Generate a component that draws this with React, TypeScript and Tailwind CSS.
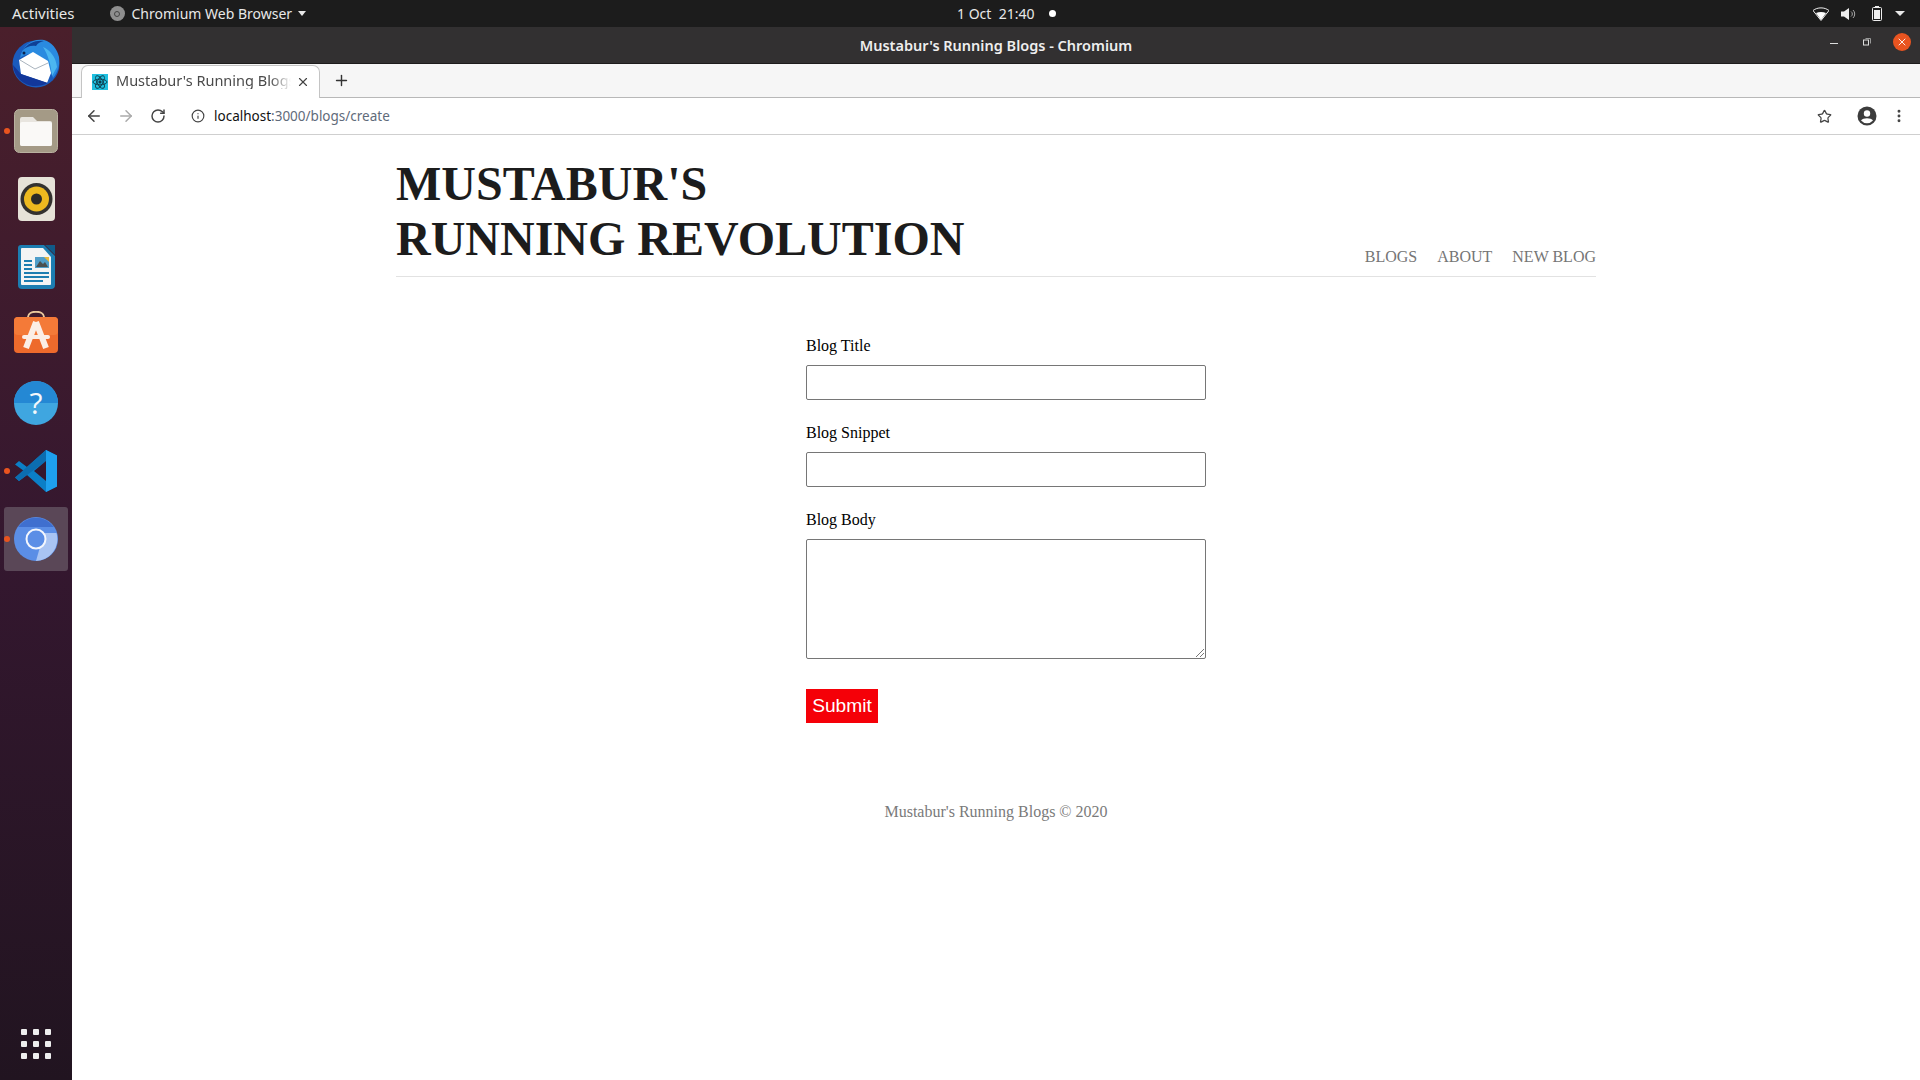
import React from "react";
import { ArrowLeft, ArrowRight, RotateCw, Info, Star, X, Plus, MoreVertical } from "lucide-react";

const Thunderbird = () => (
  <svg width="50" height="50" viewBox="0 0 50 50">
    <circle cx="25" cy="26" r="23.500" fill="#1a5bbd" />
    <path d="M9 20C11 8 21 0 33 2c8 2 13 9 15 17 1 8-1 15-6 21-2-7-5-14-10-19C25 15 16 14 9 20z" fill="#2a8ae0" />
    <path d="M12 12c5-7 13-10 21-9-4 1-6 2-8 5-5-1-10 1-13 4z" fill="#0f3f95" />
    <path d="M32 9c7 3 13 10 14 20l-5 9c-1-11-4-21-9-29z" fill="#4cb6f0" />
    <path d="M8 22L22 14l15 9 3 12-4 10-26-9z" fill="#ffffff" />
    <path d="M9 22l15 9 13-6" fill="none" stroke="#aab4be" strokeWidth="1" />
    <path d="M2 27c1 11 10 21 22 21 5 0 9-1 13-3L10 36z" fill="#12379a" />
    <circle cx="13" cy="15" r="1.500" fill="#0a2350" />
  </svg>
);
const Files = () => (
  <svg width="44" height="44" viewBox="0 0 44 44">
    <rect x="0.500" y="0.500" width="43" height="43" rx="5" fill="#a49a86" stroke="#b9b1a0" />
    <path d="M6 10a2 2 0 012-2h11l4 4h13a2 2 0 012 2v21a2 2 0 01-2 2H8a2 2 0 01-2-2z" fill="#e8e5df" />
    <path d="M6 15a2 2 0 012-2h28a2 2 0 012 2v20a2 2 0 01-2 2H8a2 2 0 01-2-2z" fill="#faf9f7" />
  </svg>
);
const Rhythmbox = () => (
  <svg width="37" height="44" viewBox="0 0 37 44">
    <rect width="37" height="44" rx="4" fill="#e6e2d8" />
    <circle cx="18.500" cy="22" r="16" fill="#33312f" />
    <circle cx="18.500" cy="22" r="12.500" fill="#edb91f" />
    <circle cx="18.500" cy="22" r="5.500" fill="#2b2a28" />
  </svg>
);
const Writer = () => (
  <svg width="37" height="44" viewBox="0 0 37 44">
    <path d="M3 0h23l11 11v29a4 4 0 01-4 4H4a4 4 0 01-4-4V3a3 3 0 013-3z" fill="#1c7db1" />
    <path d="M4 3h21l8 9v27a1 1 0 01-1 1H4a1 1 0 01-1-1V4a1 1 0 011-1z" fill="#f3f4f4" />
    <path d="M27 0l10 0 0 10z" fill="#105a88" />
    <path d="M6 15h8v2H6zM6 19h8v2H6zM6 23h8v2H6zM6 27h25v2H6zM6 31h25v2H6zM6 35h19v2H6z" fill="#1c7db1" />
    <rect x="17" y="12" width="14" height="11" fill="#4f9ec9" />
    <path d="M18 22l4-6 3 3 2-2 3 5z" fill="#4a4f4f" />
    <path d="M31 12v5l-5-5z" fill="#e9b93f" />
  </svg>
);
const Software = () => (
  <svg width="44" height="44" viewBox="0 0 44 44">
    <path d="M14 6c0-7 16-7 16 0" fill="none" stroke="#eac89c" strokeWidth="2" />
    <rect y="6" width="44" height="36" rx="4" fill="#ee6a2c" />
    <rect y="6" width="44" height="18" rx="4" fill="#f47a38" />
    <path d="M22 11L12 37M22 11l10 26" fill="none" stroke="#fbeee6" strokeWidth="6" />
    <rect x="8" y="24" width="28" height="4" rx="2" fill="#fbeee6" />
  </svg>
);
const Help = () => (
  <svg width="44" height="44" viewBox="0 0 44 44">
    <circle cx="22" cy="22" r="22" fill="#3fa6e0" />
    <path d="M0 22a22 22 0 0144 0z" fill="#2488d4" />
    <text x="22" y="33" textAnchor="middle" fontSize="30" fill="#f4f8fb" fontFamily="Open Sans, sans-serif" fontWeight="400">?</text>
  </svg>
);
const VSCode = () => (
  <svg width="44" height="44" viewBox="0 0 44 44">
    <path d="M32 1l11 5.500v31L32 43 13 26l-8 6-4-3.500L10 22 1 15.500 5 12l8 6z" fill="#0b7fc7" />
    <path d="M32 1l11 5.500v31L32 43z" fill="#1ea0ee" />
    <path d="M32 12L13 26l-8 6-4-3.500L32 1z" fill="#0c6db0" />
    <path d="M32 12L20 22l12 10z" fill="#35172c" />
  </svg>
);
const Chromium = () => (
  <svg width="44" height="44" viewBox="0 0 44 44">
    <circle cx="22" cy="22" r="22" fill="#5b8ee6" />
    <path d="M4 10A22 22 0 0140 10H22z" fill="#3f6fcf" />
    <path d="M30 16h12.500A22 22 0 0122 44z" fill="#a9c4f3" />
    <circle cx="22" cy="22" r="9.500" fill="#5b8ee6" stroke="#f4f7fd" strokeWidth="2" />
  </svg>
);

const Dot = () => <span className="absolute left-[4px] top-1/2 -mt-[3px] w-[6px] h-[6px] rounded-full bg-[#e9541f]" />;

function DockItem({ children, running, active, lift }: { children: React.ReactNode; running?: boolean; active?: boolean; lift?: boolean }) {
  return (
    <div className="relative h-[68px] w-full flex items-center justify-center">
      {active && <div className="absolute left-[4px] right-[4px] top-[2px] bottom-[2px] rounded-[3px] bg-[#5a4757]" />}
      {running && <Dot />}
      <div className={lift ? "relative flex items-center justify-center -mt-[4px]" : "relative flex items-center justify-center"}>{children}</div>
    </div>
  );
}

const Field = ({ label }: { label: string }) => (
  <div className="flex flex-col">
    <label className="text-[16px] leading-[18px] mb-[10px] text-black">{label}</label>
    <div className="h-[35px] border border-[#767676] rounded-[2px] bg-white" />
  </div>
);

export default function App() {
  return (
    <div className="w-[1920px] h-[1080px] overflow-hidden flex flex-col bg-white font-['Liberation_Serif',serif]">
      <div className="h-[27px] shrink-0 bg-[#1c1c1c] flex items-center text-[14px] text-[#e8e8e8] font-['Noto_Sans',sans-serif] relative">
        <span className="ml-[12px] leading-none text-[15px]">Activities</span>
        <span className="ml-[35px] w-[15px] h-[15px] rounded-full bg-[#8f8f8f] flex items-center justify-center">
          <span className="w-[6px] h-[6px] rounded-full border border-[#444]" />
        </span>
        <span className="ml-[7px] leading-none">Chromium Web Browser</span>
        <span className="ml-[6px] w-0 h-0 border-x-[4.5px] border-x-transparent border-t-[5px] border-t-[#e8e8e8]" />
        <span className="absolute left-[957px] top-[5px] leading-[17px] whitespace-nowrap">1 Oct&nbsp; 21:40</span>
        <span className="absolute left-[1049px] top-[10px] w-[7px] h-[7px] rounded-full bg-white" />
        <div className="ml-auto flex items-center mr-[15px]">
          <svg width="16" height="14" viewBox="0 0 16 14"><path d="M0 3.500C4.500 0 11.500 0 16 3.500L8 13.500z" fill="none" stroke="#eee" strokeWidth="1" /><path d="M3 6c3-1.500 7-1.500 10 0l-5 7z" fill="#fff" /></svg>
          <svg className="ml-[12px]" width="15" height="14" viewBox="0 0 15 14"><path d="M0 4.500h3L8 1v12L3 9.500H0z" fill="#eee" /><path d="M10 4.500a3 3 0 010 5M12 3a5.500 5.500 0 010 8" fill="none" stroke="#aaa" strokeWidth="1" /></svg>
          <svg className="ml-[16px]" width="10" height="15" viewBox="0 0 10 15"><rect x="0.500" y="1.500" width="9" height="13" rx="1" fill="none" stroke="#eee" /><rect x="3" y="0" width="4" height="1.500" fill="#eee" /><rect x="2" y="4" width="6" height="9" fill="#eee" /></svg>
          <span className="ml-[13px] w-0 h-0 border-x-[5px] border-x-transparent border-t-[5px] border-t-[#e8e8e8]" />
        </div>
      </div>

      <div className="flex-1 flex min-h-0">
        <div className="w-[72px] shrink-0 flex flex-col bg-gradient-to-b from-[#4a1f2b] via-[#34172f] to-[#211420]">
          <div className="h-[2px]" />
          <DockItem><Thunderbird /></DockItem>
          <DockItem running><Files /></DockItem>
          <DockItem><Rhythmbox /></DockItem>
          <DockItem><Writer /></DockItem>
          <DockItem lift><Software /></DockItem>
          <DockItem><Help /></DockItem>
          <DockItem running><VSCode /></DockItem>
          <DockItem running active><Chromium /></DockItem>
          <div className="mt-auto mb-[21px] self-center grid grid-cols-3 gap-[6px]">
            {Array.from({ length: 9 }).map((_, i) => (
              <span key={i} className="w-[6px] h-[6px] rounded-[1px] bg-[#eeeeee]" />
            ))}
          </div>
        </div>

        <div className="flex-1 min-w-0 flex flex-col">
          <div className="h-[37px] shrink-0 bg-[#323031] border-b border-[#1d1c1c] flex items-center relative font-['Noto_Sans',sans-serif]">
            <span className="w-full text-center text-[14.5px] font-semibold text-[#eeeeee] leading-none mt-[1px]">Mustabur's Running Blogs - Chromium</span>
            <div className="absolute right-[9px] top-[6px] flex items-center">
              <span className="w-[8px] h-px bg-[#ddd] mt-[3px]" />
              <svg className="ml-[25px]" width="8" height="8" viewBox="0 0 8 8"><rect x="0.500" y="2" width="5" height="5" fill="none" stroke="#ddd" /><path d="M2.500 0.500h5v5" fill="none" stroke="#999" /></svg>
              <span className="ml-[22px] w-[18px] h-[18px] rounded-full bg-[#e95420] flex items-center justify-center"><X size={12} color="#fff" strokeWidth={1.800} /></span>
            </div>
          </div>

          <div className="h-[34px] shrink-0 bg-[#f6f6f6] border-b border-[#b8b8b8] flex items-end relative font-['Noto_Sans',sans-serif]">
            <div className="ml-[9px] w-[239px] h-[33px] -mb-px bg-white border border-b-0 border-[#c4c4c4] rounded-t-[7px] flex items-center relative">
              <span className="ml-[10px] -mt-[1px] w-[16px] h-[16px] bg-[#1fc0e0] flex items-center justify-center shrink-0">
                <svg width="16" height="16" viewBox="0 0 16 16" fill="none" stroke="#0c3a4a" strokeWidth="0.900"><ellipse cx="8" cy="8" rx="7" ry="2.800" /><ellipse cx="8" cy="8" rx="7" ry="2.800" transform="rotate(60 8 8)" /><ellipse cx="8" cy="8" rx="7" ry="2.800" transform="rotate(120 8 8)" /><circle cx="8" cy="8" r="1.200" fill="#0c3a4a" /></svg>
              </span>
              <span className="ml-[8px] -mt-[4px] w-[175px] overflow-hidden whitespace-nowrap text-[14.5px] text-[#4a4a4a] leading-[18px] [mask-image:linear-gradient(to_right,black_88%,transparent)]">Mustabur's Running Blogs</span>
              <X size={14} className="ml-[5px] -mt-[1px] text-[#444]" strokeWidth={2} />
            </div>
            <Plus size={17} className="ml-[13px] mb-[8px] text-[#333]" strokeWidth={2} />
          </div>

          <div className="h-[37px] shrink-0 bg-white border-b border-[#cfcfcf] flex items-center font-['Noto_Sans',sans-serif]">
            <ArrowLeft size={18} className="ml-[13px] text-[#444]" strokeWidth={2} />
            <ArrowRight size={18} className="ml-[14px] text-[#aaa]" strokeWidth={2} />
            <RotateCw size={16} className="ml-[15px] text-[#444]" strokeWidth={2.200} />
            <div className="ml-[11px] flex-1 h-[28px] bg-white rounded-full flex items-center">
              <Info size={14} className="ml-[14px] text-[#444]" strokeWidth={2} />
              <span className="ml-[9px] mt-[2px] text-[13.5px] text-[#111] leading-none">localhost<span className="text-[#5f6b7a]">:3000/blogs/create</span></span>
              <Star size={15} className="ml-auto mr-[12px] text-[#444]" strokeWidth={2} />
            </div>
            <svg className="ml-[13px]" width="20" height="20" viewBox="0 0 20 20"><circle cx="10" cy="10" r="9.500" fill="#3c3c3c" /><circle cx="10" cy="7.500" r="3.200" fill="#fff" /><path d="M4 14.500c2-3 10-3 12 0a8 8 0 01-12 0z" fill="#fff" /></svg>
            <MoreVertical size={16} className="ml-[14px] mr-[13px] text-[#444]" strokeWidth={2.400} />
          </div>

          <div className="flex-1 bg-white min-h-0 flex flex-col">
            <div className="w-[1200px] ml-[324px] h-[142px] shrink-0 border-b border-[#e2e2e2] flex items-end justify-between">
              <h1 className="text-[48px] leading-[55px] font-bold text-[#1c1c1c] mb-[10px]">MUSTABUR'S<br />RUNNING REVOLUTION</h1>
              <div className="flex gap-[20px] text-[16px] leading-[18px] text-[#757575] mb-[10px]">
                <span>BLOGS</span><span>ABOUT</span><span>NEW BLOG</span>
              </div>
            </div>
            <div className="ml-[734px] w-[400px] mt-[60px] flex flex-col gap-[24px]">
              <Field label="Blog Title" />
              <Field label="Blog Snippet" />
              <div className="flex flex-col">
                <label className="text-[16px] leading-[18px] mb-[10px] text-black">Blog Body</label>
                <div className="relative h-[120px] border border-[#767676] rounded-[2px] bg-white">
                  <svg className="absolute right-0 bottom-0" width="10" height="10" viewBox="0 0 10 10" stroke="#777" strokeWidth="1"><path d="M1 9L9 1M5 9L9 5" /></svg>
                </div>
              </div>
              <button className="mt-[6px] self-start w-[72px] h-[34px] bg-[#f50008] text-white text-[19.2px] leading-none font-['Liberation_Sans',sans-serif]">Submit</button>
            </div>
            <p className="mt-[80px] text-center text-[16px] leading-[18px] text-[#7a7a7a]">Mustabur's Running Blogs © 2020</p>
          </div>
        </div>
      </div>
    </div>
  );
}
